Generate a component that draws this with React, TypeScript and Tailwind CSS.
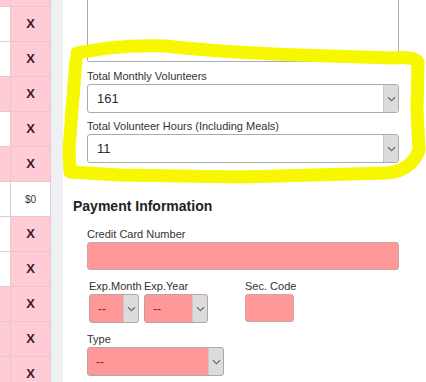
import React from "react";

const rows: { left: boolean; mark: string }[] = [
  { left: true, mark: "" },
  { left: false, mark: "X" },
  { left: false, mark: "X" },
  { left: true, mark: "X" },
  { left: false, mark: "X" },
  { left: true, mark: "X" },
  { left: false, mark: "$0" },
  { left: false, mark: "X" },
  { left: false, mark: "X" },
  { left: true, mark: "X" },
  { left: true, mark: "X" },
  { left: true, mark: "X" },
];

function Chevron() {
  return (
    <svg width="9" height="6" viewBox="0 0 9 6" className="block">
      <path d="M1 1.2 L4.5 4.6 L8 1.2" fill="none" stroke="#6b6b6b" strokeWidth="1.2" />
    </svg>
  );
}

function Select({
  value,
  pink,
  className,
}: {
  value: string;
  pink?: boolean;
  className: string;
}) {
  return (
    <div
      className={`flex overflow-hidden rounded-[3px] border ${
        pink ? "border-[#b9a3a3] bg-[#ff9999]" : "border-[#ababab] bg-white"
      } ${className}`}
    >
      <div
        className={`flex flex-1 items-center ${
          pink ? "pl-[8px] text-[12px] text-[#7e2424]" : "pl-[9px] text-[13px] text-[#2b2b2b]"
        }`}
      >
        {value}
      </div>
      <div className="flex w-[15px] items-center justify-center border-l border-[#c8c8c8] bg-[#dcdcdc]">
        <Chevron />
      </div>
    </div>
  );
}

function Label({ children, className }: { children: React.ReactNode; className: string }) {
  return <div className={`text-[11px] leading-[14px] text-[#333] ${className}`}>{children}</div>;
}

export default function App() {
  return (
    <div className="relative flex h-[382px] w-[426px] overflow-hidden bg-white font-['Liberation_Sans',Arial,sans-serif]">
      {/* table column on the left */}
      <div className="-mt-[28px] flex w-[51px] shrink-0 flex-col">
        {rows.map((r, i) => (
          <div key={i} className="flex h-[35px] shrink-0 border-b border-[#e4c9ce]">
            <div
              className={`w-[11px] border-r border-[#e4c9ce] ${r.left ? "bg-[#ffccd5]" : "bg-white"}`}
            />
            <div
              className={`flex flex-1 items-center justify-center border-r border-[#e4c9ce] ${
                r.mark === "$0"
                  ? "bg-white text-[10px] text-[#333]"
                  : "bg-[#ffccd5] text-[13px] font-bold text-[#3a1c1c]"
              }`}
            >
              {r.mark}
            </div>
          </div>
        ))}
      </div>
      <div className="w-[12px] shrink-0 bg-[#eef0f4]" />

      {/* form */}
      <div className="flex flex-1 flex-col pl-[10px]">
        <div className="relative ml-[14px] -mt-[20px] h-[82px] w-[312px] shrink-0 rounded-[2px] border border-[#ababab] bg-white">
          <svg
            width="8"
            height="8"
            viewBox="0 0 8 8"
            className="absolute bottom-[1px] right-[1px]"
          >
            <path d="M7 1 L1 7 M7 4 L4 7" stroke="#b5b5b5" strokeWidth="1" strokeDasharray="1 1" />
          </svg>
        </div>

        <Label className="ml-[14px] mt-[7px] mb-[1px]">Total Monthly Volunteers</Label>
        <Select value="161" className="ml-[14px] h-[29px] w-[312px] shrink-0" />

        <Label className="ml-[14px] mt-[6px] mb-[1px]">Total Volunteer Hours (Including Meals)</Label>
        <Select value="11" className="ml-[14px] h-[29px] w-[312px] shrink-0" />

        <h2 className="mt-[33px] text-[14px] font-bold leading-[20px] text-[#222]">
          Payment Information
        </h2>

        <Label className="ml-[14px] mt-[11px] mb-[1px]">Credit Card Number</Label>
        <div className="ml-[14px] h-[28px] w-[312px] shrink-0 rounded-[3px] border border-[#c9a7a7] bg-[#ff9999]" />

        <div className="ml-[16px] mt-[9px] flex shrink-0">
          <div className="flex w-[50px] flex-col">
            <Label className="mb-[1px] whitespace-nowrap">Exp.Month</Label>
            <Select value="--" pink className="h-[29px] w-[50px]" />
          </div>
          <div className="ml-[5px] flex w-[64px] flex-col">
            <Label className="mb-[1px]">Exp.Year</Label>
            <Select value="--" pink className="h-[29px] w-[64px]" />
          </div>
          <div className="ml-[37px] flex w-[49px] flex-col">
            <Label className="mb-[1px] whitespace-nowrap">Sec. Code</Label>
            <div className="h-[28px] w-[49px] rounded-[3px] border border-[#c9a7a7] bg-[#ff9999]" />
          </div>
        </div>

        <Label className="ml-[14px] mt-[9px] mb-[1px]">Type</Label>
        <Select value="--" pink className="ml-[14px] h-[29px] w-[137px] shrink-0" />
      </div>

      {/* yellow marker highlight */}
      <svg
        width="426"
        height="382"
        viewBox="0 0 426 382"
        className="pointer-events-none absolute left-0 top-0"
      >
        <path
          d="M77 53 Q120 44 166 46 Q215 52 300 55 L392 58 Q414 56 418 62 L417 110 L419 150 Q412 170 388 173 L240 177 L120 175 L70 172 L69 150 L72 110 L76 60"
          fill="none"
          stroke="#f7f700"
          strokeWidth="13"
          strokeLinecap="round"
          strokeLinejoin="round"
        />
      </svg>
    </div>
  );
}
